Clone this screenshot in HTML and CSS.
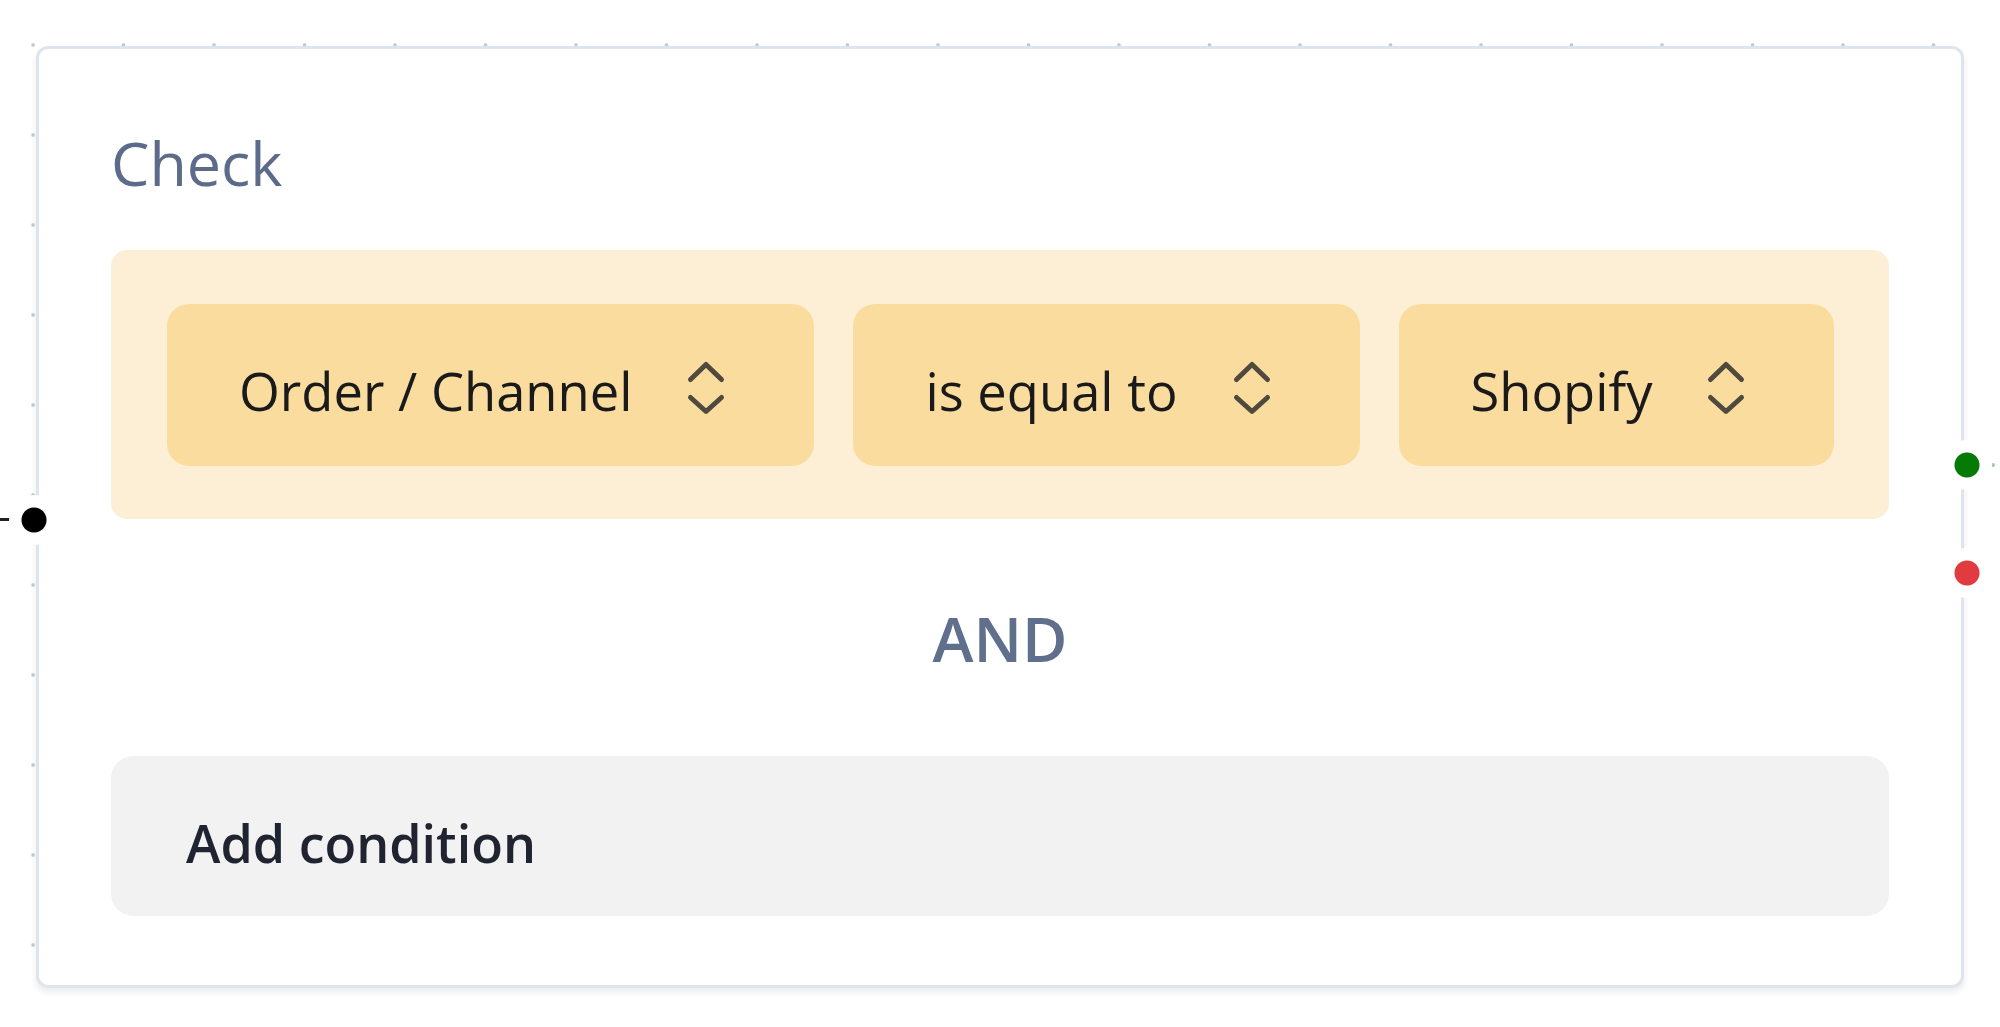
FILE: index.html
```html
<!DOCTYPE html>
<html lang="en">
<head>
<meta charset="utf-8">
<title>Check node</title>
<link rel="stylesheet" href="styles.css">
</head>
<body>
<div class="canvas">
  <span class="edge-stub edge-stub-in"></span>
  <span class="edge-stub edge-stub-out"></span>
  <div class="node">
    <span class="handle handle-in"></span>
    <span class="handle handle-true"></span>
    <span class="handle handle-false"></span>
    <div class="node-title">Check</div>
    <div class="group">
      <button class="select" type="button">
        <span class="select-label">Order / Channel</span>
        <svg class="chev" viewBox="0 0 72 60" width="72" height="60" aria-hidden="true"><path d="M20.5 21.5 L36 6.5 L51.5 21.5 M20.5 39.5 L36 53.5 L51.5 39.5"/></svg>
      </button>
      <button class="select" type="button">
        <span class="select-label">is equal to</span>
        <svg class="chev" viewBox="0 0 72 60" width="72" height="60" aria-hidden="true"><path d="M20.5 21.5 L36 6.5 L51.5 21.5 M20.5 39.5 L36 53.5 L51.5 39.5"/></svg>
      </button>
      <button class="select" type="button">
        <span class="select-label">Shopify</span>
        <svg class="chev" viewBox="0 0 72 60" width="72" height="60" aria-hidden="true"><path d="M20.5 21.5 L36 6.5 L51.5 21.5 M20.5 39.5 L36 53.5 L51.5 39.5"/></svg>
      </button>
    </div>
    <div class="joiner">AND</div>
    <button class="add" type="button"><span class="add-label">Add condition</span></button>
  </div>
</div>
</body>
</html>
```

FILE: styles.css
```css
html, body {
  margin: 0;
  padding: 0;
  background: #ffffff;
}

body {
  font-family: "Open Sans", "Noto Sans", "Liberation Sans", sans-serif;
}

.canvas {
  position: relative;
  box-sizing: border-box;
  height: 1027px;
  padding: 46px 36px 0;
  overflow: hidden;
  background-color: #ffffff;
  background-image: radial-gradient(circle at center, #c3c8d0 0 1.4px, rgba(195, 200, 208, 0) 2.2px);
  background-size: 90.5px 90px;
  background-position: -12.25px 0;
}

.node {
  position: relative;
  background: #ffffff;
  border: 3px solid #dfe5ee;
  border-radius: 12px;
  padding: 72px 72px 69px;
  box-shadow: 0 4px 6px rgba(30, 41, 59, 0.09);
}

.node-title {
  font-size: 61px;
  line-height: 84px;
  color: #5b6b89;
  margin-bottom: 45px;
}

.group {
  display: flex;
  gap: 39px;
  padding: 54px 54px 53px 56px;
  background: #fdefd6;
  border-radius: 16px;
}

.select {
  display: flex;
  align-items: center;
  gap: 38px;
  height: 162px;
  padding: 0 72px;
  margin: 0;
  border: 0;
  border-radius: 22px;
  background: #fadc9f;
  font-family: inherit;
  font-size: 52.5px;
  color: #1a1a1a;
  cursor: pointer;
}

.select-label {
  padding-top: 12px;
  line-height: 1;
  white-space: nowrap;
}

.chev {
  display: block;
  flex: none;
  padding-top: 5px;
}

.chev path {
  fill: none;
  stroke: #50493d;
  stroke-width: 5;
  stroke-linecap: round;
  stroke-linejoin: round;
}

.joiner {
  display: flex;
  align-items: center;
  justify-content: center;
  height: 237px;
  font-size: 62px;
  font-weight: 600;
  color: #5f6f8c;
}

.add {
  display: flex;
  align-items: center;
  box-sizing: border-box;
  width: 100%;
  height: 160px;
  padding: 0 75px;
  margin: 0;
  border: 0;
  border-radius: 22px;
  background: #f2f2f2;
  font-family: inherit;
  font-size: 52px;
  font-weight: 600;
  color: #1f2430;
  cursor: pointer;
}

.add-label {
  padding-top: 14px;
  line-height: 1;
}

.handle {
  position: absolute;
  width: 50px;
  height: 50px;
  border-radius: 50%;
  z-index: 2;
}

.handle-in {
  left: -30px;
  top: 446px;
  background: radial-gradient(circle at center, #000000 0 12px, #ffffff 13px);
}

.handle-true {
  right: -31px;
  top: 391px;
  background: radial-gradient(circle at center, #067a06 0 12px, #ffffff 13px);
}

.handle-false {
  right: -31px;
  top: 499px;
  background: radial-gradient(circle at center, #e03b3e 0 12px, #ffffff 13px);
}

.edge-stub {
  position: absolute;
  display: block;
}

.edge-stub-in {
  left: 0;
  top: 518px;
  width: 10px;
  height: 3px;
  background: #222222;
}

.edge-stub-out {
  left: 1991px;
  top: 463px;
  width: 4px;
  height: 4px;
  border-radius: 50%;
  background: #9fd09f;
}
```
